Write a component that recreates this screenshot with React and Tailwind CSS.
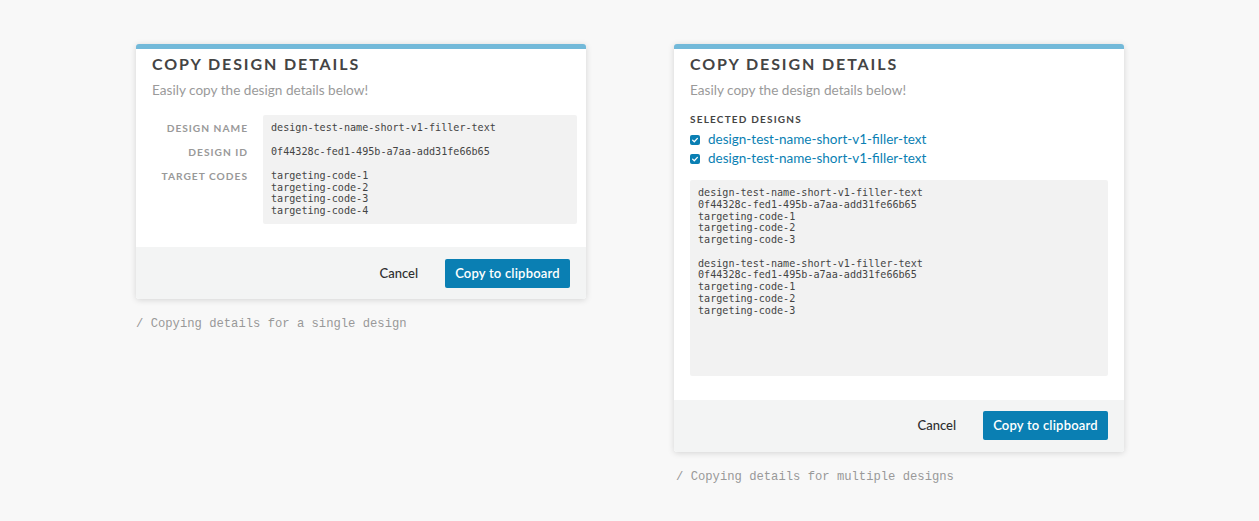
const SANS = "font-['Lato','Open_Sans',sans-serif]";
const MONO = "font-['DejaVu_Sans_Mono','Liberation_Mono',monospace]";
const CAPTION = "font-['Liberation_Mono','DejaVu_Sans_Mono',monospace]";

const NAME = "design-test-name-short-v1-filler-text";
const ID = "0f44328c-fed1-495b-a7aa-add31fe66b65";

function Header() {
  return (
    <>
      <h2 className={`${SANS} text-[16px] leading-[20px] font-bold tracking-[1.9px] text-[#444]`}>
        COPY DESIGN DETAILS
      </h2>
      <p className={`${SANS} mt-[7px] text-[13.6px] leading-[18px] text-[#9a9a9a]`}>
        Easily copy the design details below!
      </p>
    </>
  );
}

function Footer({ pt, pb }) {
  return (
    <div className={`flex items-center justify-end bg-[#f3f4f4] px-4 ${pt} ${pb}`}>
      <button className={`${SANS} mr-[27px] text-[13px] font-medium text-[#2e2e2e]`}>Cancel</button>
      <button
        className={`${SANS} h-[29px] w-[125px] rounded-[2px] bg-[#0a7fb3] text-[13px] font-semibold tracking-[0.2px] text-white`}
      >
        Copy to clipboard
      </button>
    </div>
  );
}

function Check() {
  return (
    <span className="flex h-[10px] w-[10px] items-center justify-center rounded-[2px] bg-[#0a7fb3]">
      <svg viewBox="0 0 10 10" className="h-[8px] w-[8px]">
        <path d="M2 5.2 L4.1 7.2 L8 3" fill="none" stroke="white" strokeWidth="1.6" strokeLinecap="round" strokeLinejoin="round" />
      </svg>
    </span>
  );
}

function SingleCard() {
  const rows = [
    ["DESIGN NAME", [NAME]],
    ["DESIGN ID", [ID]],
    ["TARGET CODES", ["targeting-code-1", "targeting-code-2", "targeting-code-3", "targeting-code-4"]],
  ];
  return (
    <div className="w-[450px]">
      <div className="overflow-hidden rounded-[3px] border-t-[5px] border-[#72b9d9] bg-white shadow-[0_1px_6px_rgba(0,0,0,0.15)]">
        <div className="pl-4 pr-[9px] pt-[5px] pb-[23px]">
          <Header />
          <div className="mt-[16px] flex">
            <div className="flex w-[96px] flex-col items-end gap-[12px] pt-[7px]">
              {rows.map(([label, lines]) => (
                <div
                  key={label}
                  className={`${SANS} text-[10.2px] font-bold tracking-[1px] text-[#999]`}
                  style={{ height: lines.length === 1 ? 12 : lines.length * 11.5 }}
                >
                  <span className="block leading-[12px]">{label}</span>
                </div>
              ))}
            </div>
            <div className="ml-[15px] flex flex-1 flex-col gap-[12px] rounded-[2px] bg-[#f2f2f2] px-2 pt-[7px] pb-[8px]">
              {rows.map(([label, lines]) => (
                <div key={label} className={`${MONO} text-[10.1px] leading-[11.5px] text-[#444]`}>
                  {lines.map((l) => (
                    <div key={l} className={lines.length === 1 ? "leading-[12px]" : ""}>{l}</div>
                  ))}
                </div>
              ))}
            </div>
          </div>
        </div>
        <Footer pt="pt-[12px]" pb="pb-[11px]" />
      </div>
      <p className={`${CAPTION} mt-[17px] text-[12.2px] leading-[16px] text-[#999]`}>
        / Copying details for a single design
      </p>
    </div>
  );
}

function MultiCard() {
  const block = [NAME, ID, "targeting-code-1", "targeting-code-2", "targeting-code-3"];
  return (
    <div className="w-[450px]">
      <div className="overflow-hidden rounded-[3px] border-t-[5px] border-[#72b9d9] bg-white shadow-[0_1px_6px_rgba(0,0,0,0.15)]">
        <div className="px-4 pt-[5px] pb-[24px]">
          <Header />
          <h3 className={`${SANS} mt-[14px] text-[10px] leading-[12px] font-bold tracking-[1.2px] text-[#444]`}>
            SELECTED DESIGNS
          </h3>
          <div className="mt-[5px]">
            {[0, 1].map((i) => (
              <div key={i} className="flex h-[19px] items-center gap-[8px]">
                <Check />
                <span className={`${SANS} text-[13.5px] text-[#0a7fb3]`}>{NAME}</span>
              </div>
            ))}
          </div>
          <div className={`${MONO} mt-[12px] h-[196px] rounded-[2px] bg-[#f2f2f2] px-2 pt-[7px] text-[10.1px] leading-[11.75px] text-[#444]`}>
            {block.map((l) => (
              <div key={"a" + l}>{l}</div>
            ))}
            <div className="h-[11.75px]" />
            {block.map((l) => (
              <div key={"b" + l}>{l}</div>
            ))}
          </div>
        </div>
        <Footer pt="pt-[11px]" pb="pb-[12px]" />
      </div>
      <p className={`${CAPTION} mt-[17px] pl-[2px] text-[12.2px] leading-[16px] text-[#999]`}>
        / Copying details for multiple designs
      </p>
    </div>
  );
}

export default function App() {
  return (
    <div className="min-h-[521px] w-full bg-[#f8f8f8] pt-[44px] pl-[136px]">
      <div className="flex items-start gap-[88px]">
        <SingleCard />
        <MultiCard />
      </div>
    </div>
  );
}
